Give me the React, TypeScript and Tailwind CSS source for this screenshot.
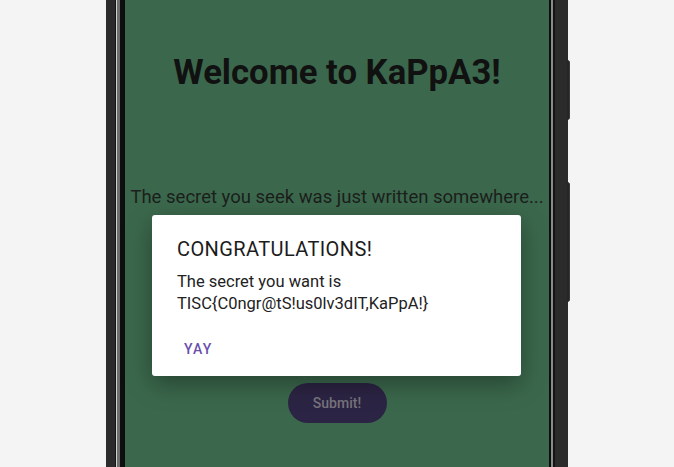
import React from "react";

const SideButton = ({ top, height }: { top: string; height: string }) => (
  <div className={`absolute -right-[2px] w-[3px] rounded-r-sm bg-[#262626] border-r border-[#3a3a3a] ${top} ${height}`} />
);

const App = () => {
  return (
    <div className="h-[467px] w-full overflow-hidden bg-[#f4f4f4] flex justify-center font-['Roboto',sans-serif]">
      <div className="relative flex h-full w-[462px] shrink-0 bg-[#2b2b2b]">
        {/* left bezel */}
        <div className="w-[9px] shrink-0 bg-[#2b2b2b]" />
        <div className="w-px shrink-0 bg-[#141414]" />
        <div className="w-px shrink-0 bg-[#d0d0d0]" />
        <div className="w-[3px] shrink-0 bg-[#6e6e6e]" />
        <div className="w-[5px] shrink-0 bg-[#0e0e0e]" />

        {/* screen */}
        <div className="relative min-w-0 flex-1 bg-[#3b684c] flex flex-col items-center">
          <h1 className="mt-[52px] text-[34.7px] leading-[40px] font-bold text-[#111111] whitespace-nowrap">
            Welcome to KaPpA3!
          </h1>
          <p className="mt-[94px] text-[18.5px] leading-[22px] text-[#1b1f1c] whitespace-nowrap">
            The secret you seek was just written somewhere...
          </p>
          <button className="mt-[175px] h-[40px] w-[99px] rounded-full bg-[#2c2444] text-[14px] font-medium text-[#77747d]">
            Submit!
          </button>

          {/* dialog */}
          <div className="absolute left-[27px] top-[215px] w-[369px] h-[161px] rounded-[3px] bg-white shadow-[0_8px_24px_rgba(0,0,0,0.35)] px-[25px] pt-[22px]">
            <h2 className="text-[20px] leading-[24px] tracking-[0.4px] text-[#1c1c1c]">
              CONGRATULATIONS!
            </h2>
            <p className="mt-[10px] text-[16.5px] leading-[22px] text-[#222222]">
              The secret you want is
              <br />
              TISC&#123;C0ngr@tS!us0lv3dIT,KaPpA!&#125;
            </p>
            <button className="mt-[24px] ml-[7px] text-[14px] font-medium tracking-[1.3px] text-[#6a4fae]">
              YAY
            </button>
          </div>
        </div>

        {/* right bezel */}
        <div className="w-[2px] shrink-0 bg-[#0d0d0d]" />
        <div className="w-[2px] shrink-0 bg-[#8a8a8a]" />
        <div className="w-[2px] shrink-0 bg-[#141414]" />
        <div className="w-[13px] shrink-0 bg-[#2b2b2b]" />

        <SideButton top="top-[60px]" height="h-[60px]" />
        <SideButton top="top-[182px]" height="h-[120px]" />
      </div>
    </div>
  );
};

export default App;
